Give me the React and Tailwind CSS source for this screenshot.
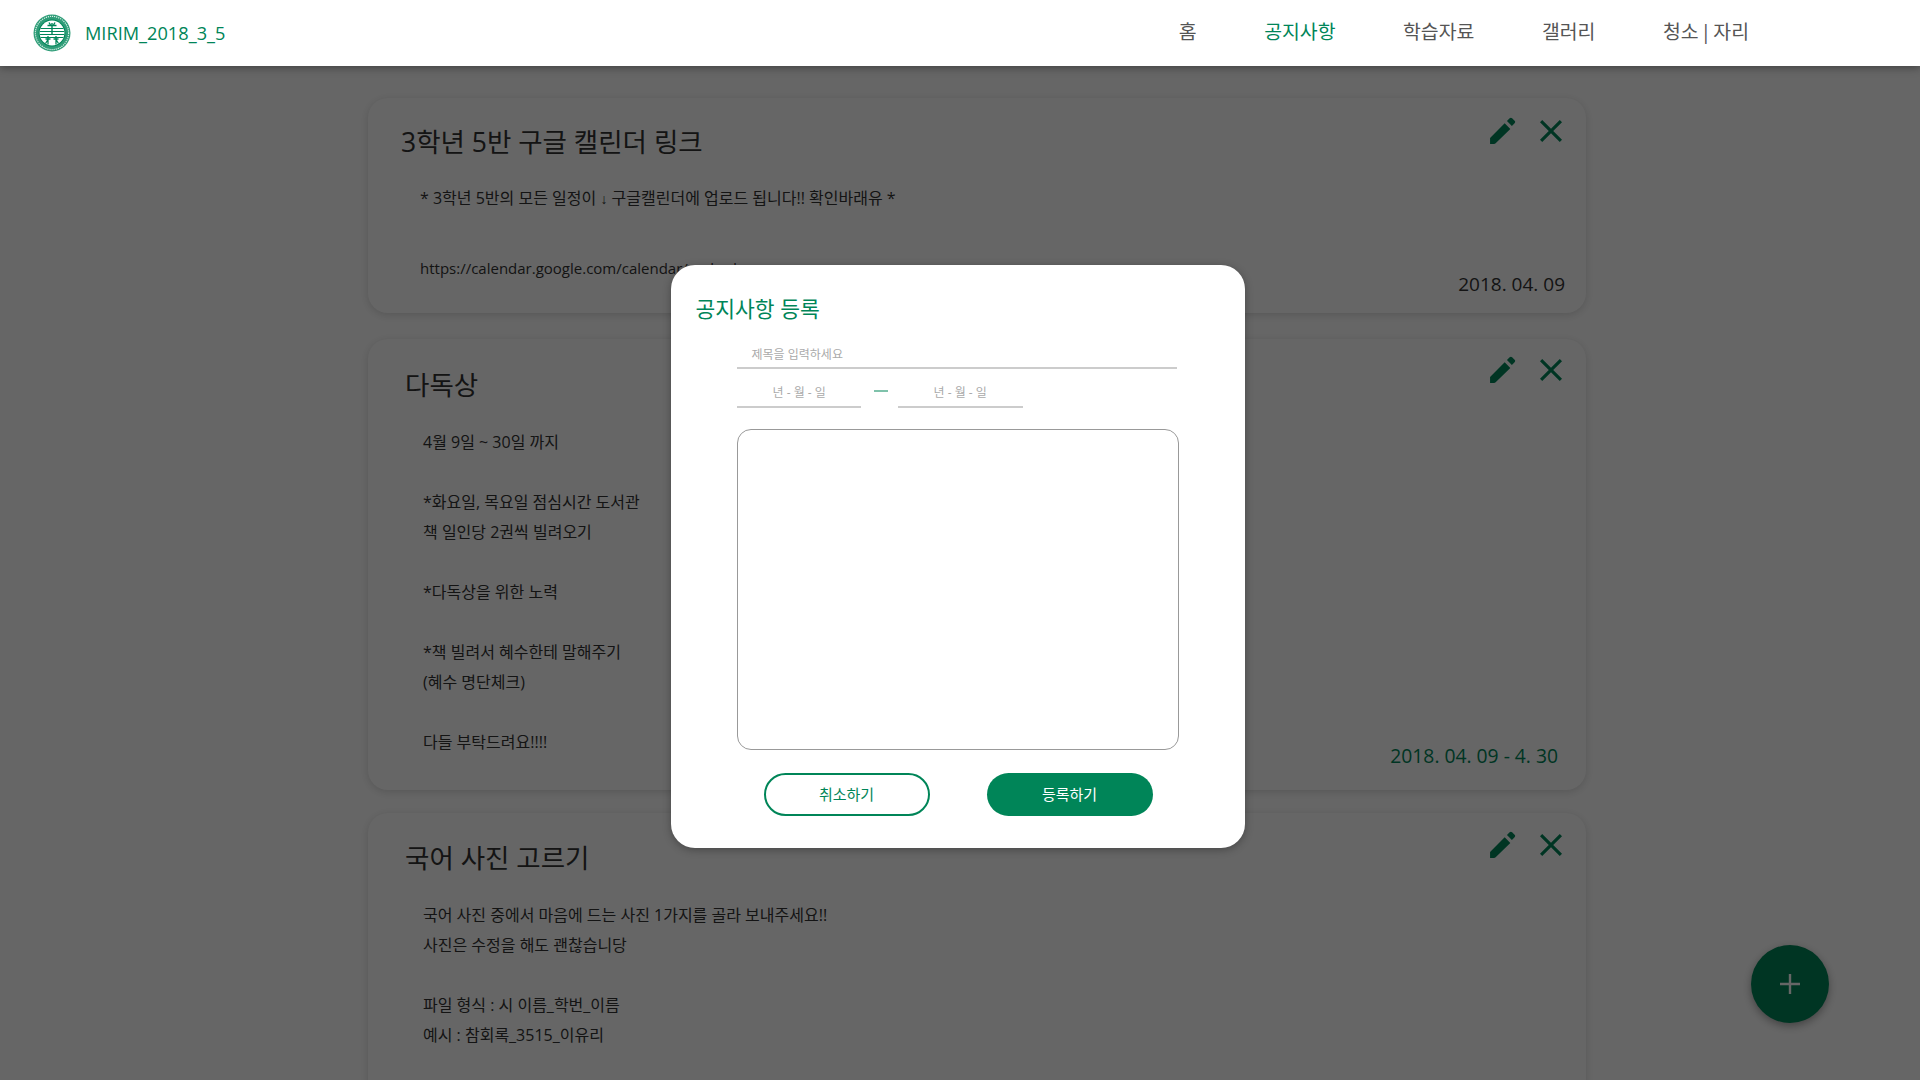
const font = "font-['Open_Sans','Noto_Sans_CJK_KR',sans-serif]";

function Logo() {
  return (
    <svg width="38" height="38" viewBox="0 0 38 38" className="shrink-0">
      <circle cx="19" cy="19" r="18.5" fill="#2f9d78" />
      <circle cx="19" cy="19" r="16.6" fill="none" stroke="#d5eee5" strokeWidth="1.2" strokeDasharray="1.2 0.9" />
      <circle cx="19" cy="19" r="13.4" fill="#008558" />
      <circle cx="19" cy="19" r="12.4" fill="#ffffff" />
      <g stroke="#008558" fill="none">
        <path d="M7.5 14.5h23M6.8 17.5h24.4M6.8 20.5h24.4M7.5 23.5h23" strokeWidth="1" />
        <path d="M16 8.5l1.5 2.5M22 8.5l-1.5 2.5M19 9v11M14.5 11.5h9" strokeWidth="1.4" />
        <path d="M15 22v8.5M23 22v8.5M12.5 25h5M20.5 25h5M15 25.5l-2.5 4M23 25.5l2.5 4" strokeWidth="1.3" />
      </g>
    </svg>
  );
}

function Pencil() {
  return (
    <svg width="26" height="27" viewBox="0 0 23 24" fill="#008558">
      <path d="M0 18.6L13 5.6l5 5L5.2 23.2c-.5.5-1.1.8-1.8.8H0z" />
      <path d="M15 3.6L17.4 1.2c.7-.7 1.5-.7 2.2 0l2.2 2.2c.7.7.7 1.5 0 2.2L19.4 8z" />
    </svg>
  );
}

function CloseIcon() {
  return (
    <svg width="22" height="22" viewBox="5 5 14 14" fill="#008558">
      <path d="M19 6.41L17.59 5 12 10.59 6.41 5 5 6.41 10.59 12 5 17.59 6.41 19 12 13.41 17.59 19 19 17.59 13.41 12z" />
    </svg>
  );
}

function PlusIcon() {
  return (
    <svg width="20" height="20" viewBox="0 0 20 20" stroke="currentColor" strokeWidth="2.4">
      <path d="M10 0v20M0 10h20" />
    </svg>
  );
}

function NoticeCard({ title, titleClass, lines, lineClass, date, dateClass, height, iconTop }) {
  return (
    <section className={`relative w-[1218px] shrink-0 rounded-[20px] bg-white shadow-[0_2px_8px_rgba(0,0,0,0.15)] ${height}`}>
      <div className={`absolute right-[24px] flex items-center gap-[24px] ${iconTop}`}>
        <Pencil />
        <CloseIcon />
      </div>
      <h2 className={`text-[26.5px] leading-[36px] text-[#333] ${titleClass}`}>{title}</h2>
      <div className={`text-[16px] leading-[30px] text-[#333] ${lineClass}`}>
        {lines.map((line, index) => (
          <p key={index} className="h-[30px] whitespace-pre">
            {line}
          </p>
        ))}
      </div>
      {date && <p className={`absolute leading-[28px] ${dateClass}`}>{date}</p>}
    </section>
  );
}

export default function App() {
  return (
    <div className={`relative h-screen overflow-hidden bg-white ${font}`}>
      <header className="relative z-20 flex h-[66px] items-center bg-white pl-[33px] pr-[171px] shadow-[0_2px_8px_rgba(0,0,0,0.35)]">
        <Logo />
        <span className="ml-[14px] mt-[2px] text-[18.2px] text-[#008558]">MIRIM_2018_3_5</span>
        <nav className="ml-auto flex gap-[67.5px] pb-[2px] text-[19.4px] text-[#555]">
          <a>홈</a>
          <a className="text-[#008558]">공지사항</a>
          <a>학습자료</a>
          <a>갤러리</a>
          <a className="[word-spacing:-3px]">청소 | 자리</a>
        </nav>
      </header>

      <main className="flex flex-col items-center gap-[26px] pl-[34px] pt-[32px]">
        <NoticeCard
          title="3학년 5반 구글 캘린더 링크"
          titleClass="pl-[33px] pt-[26px]"
          lines={[
            <>
              * 3학년 5반의 모든 일정이 <span className="font-['Liberation_Sans'] text-[14px]">↓</span> 구글캘린더에 업로드 됩니다!! 확인바래유 *
            </>,
            "",
            <span className="text-[15px]">https://calendar.google.com/calendar/embed</span>,
          ]}
          lineClass="pl-[52px] pt-[23px] [&>p:nth-child(2)]:h-[40px]"
          date="2018. 04. 09"
          dateClass="right-[21px] top-[172px] text-[19px] text-[#333]"
          height="h-[215px]"
          iconTop="top-[19px]"
        />
        <NoticeCard
          title="다독상"
          titleClass="pl-[37px] pt-[28px]"
          lines={[
            "4월 9일 ~ 30일 까지",
            "",
            "*화요일, 목요일 점심시간 도서관",
            "책 일인당 2권씩 빌려오기",
            "",
            "*다독상을 위한 노력",
            "",
            "*책 빌려서 혜수한테 말해주기",
            "(혜수 명단체크)",
            "",
            "다들 부탁드려요!!!!",
          ]}
          lineClass="pl-[55px] pt-[24px]"
          date="2018. 04. 09 - 4. 30"
          dateClass="right-[28px] top-[403px] text-[19.3px] text-[#008558]"
          height="h-[451px]"
          iconTop="top-[17px]"
        />
        <NoticeCard
          title="국어 사진 고르기"
          titleClass="pl-[37px] pt-[27px]"
          lines={[
            "국어 사진 중에서 마음에 드는 사진 1가지를 골라 보내주세요!!",
            "사진은 수정을 해도 괜찮습니당",
            "",
            "파일 형식 : 시 이름_학번_이름",
            "예시 : 참회록_3515_이유리",
          ]}
          lineClass="pl-[55px] pt-[24px]"
          height="h-[400px] -mt-[3px]"
          iconTop="top-[18px]"
        />
      </main>

      <button className="absolute right-[91px] top-[945px] z-0 flex h-[78px] w-[78px] items-center justify-center rounded-full bg-[#008558] text-white shadow-[0_3px_8px_rgba(0,0,0,0.35)]">
        <PlusIcon />
      </button>

      {/* dim layer sits under the header, above the page */}
      <div className="absolute inset-0 z-10 flex justify-center bg-black/60 pr-[5px] pt-[265px]">
        <div className="h-[583px] w-[574px] rounded-[24px] bg-white pl-[25px] pr-[66px] pt-[29px] shadow-[0_2px_8px_rgba(0,0,0,0.3)]">
          <h3 className="text-[21.5px] leading-[30px] text-[#008558]">공지사항 등록</h3>
          <div className="ml-[41px] w-[440px]">
            <div className="mt-[23px] h-[22px] border-b-2 border-[#ccc] pl-[15px] text-[12px] leading-[16px] text-[#aaa]">
              제목을 입력하세요
            </div>
            <div className="mt-[12px] flex">
              <div className="h-[27px] w-[124px] border-b-2 border-[#ccc] pl-[36px] text-[12px] leading-[24px] text-[#aaa]">
                년 - 월 - 일
              </div>
              <div className="ml-[13px] mt-[9px] h-[2px] w-[14px] bg-[#7fc2ab]" />
              <div className="ml-[10px] h-[27px] w-[125px] border-b-2 border-[#ccc] pl-[36px] text-[12px] leading-[24px] text-[#aaa]">
                년 - 월 - 일
              </div>
            </div>
            <div className="mt-[21px] h-[321px] w-[442px] rounded-[14px] border-[1.5px] border-[#999]" />
            <div className="mt-[23px] flex gap-[57px] pl-[27px]">
              <button className="h-[43px] w-[166px] rounded-full border-2 border-[#008558] text-[15px] text-[#008558]">
                취소하기
              </button>
              <button className="h-[43px] w-[166px] rounded-full bg-[#008558] text-[15px] text-white">
                등록하기
              </button>
            </div>
          </div>
        </div>
      </div>
    </div>
  );
}
